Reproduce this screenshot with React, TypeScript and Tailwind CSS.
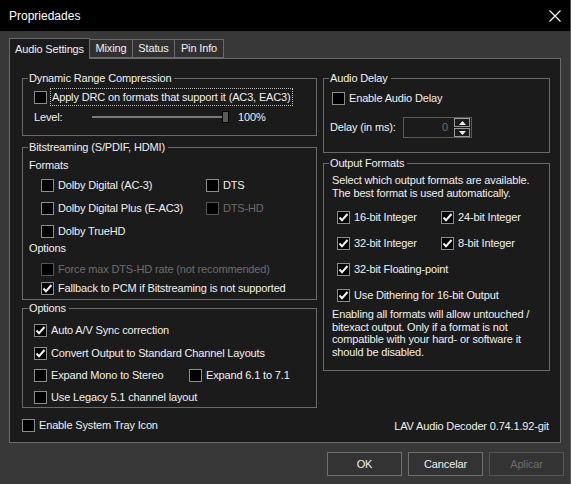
import React from "react";

function Check({ checked = false, disabled = false }: { checked?: boolean; disabled?: boolean }) {
  return (
    <span
      className={`flex h-[13px] w-[13px] shrink-0 items-center justify-center border bg-black ${
        disabled ? "border-[#555]" : "border-[#8c8c8c]"
      }`}
    >
      {checked && (
        <svg width="11" height="11" viewBox="0 0 11 11">
          <path d="M1.5 5.5 L4 8.2 L9.5 2" fill="none" stroke="#f2f2f2" strokeWidth="2" />
        </svg>
      )}
    </span>
  );
}

function CheckRow({
  label,
  checked,
  disabled,
  className = "",
}: {
  label: string;
  checked?: boolean;
  disabled?: boolean;
  className?: string;
}) {
  return (
    <div className={`flex h-[14px] items-center gap-[4px] ${className}`}>
      <Check checked={checked} disabled={disabled} />
      <span className={`whitespace-nowrap ${disabled ? "text-[#6d6d6d]" : ""}`}>{label}</span>
    </div>
  );
}

function Group({ title, className = "", children }: { title: string; className?: string; children: React.ReactNode }) {
  return (
    <fieldset className={`border border-[#6a6a6a] ${className}`}>
      <legend className="ml-[5px] h-[14px] px-[1px] pr-[3px] leading-[14px]">{title}</legend>
      {children}
    </fieldset>
  );
}

export default function App() {
  return (
    <div className="flex h-[484px] w-[571px] flex-col border-r border-[#555] bg-[#383838] font-['Liberation_Sans',Arial,sans-serif] text-[11px] tracking-[-0.15px] text-[#f0f0f0]">
      {/* title bar */}
      <div className="flex h-[31px] shrink-0 items-center justify-between bg-black pl-[9px] pr-[9px]">
        <span className="text-[12px] tracking-normal text-white">Propriedades</span>
        <svg width="12" height="12" viewBox="0 0 12 12">
          <path d="M0.5 0.5 L11.5 11.5 M11.5 0.5 L0.5 11.5" stroke="#fff" strokeWidth="1.1" />
        </svg>
      </div>

      <div className="flex flex-1 flex-col px-[9px] pt-[7px]">
        {/* tabs */}
        <div className="flex h-[20px] items-end">
          <div className="relative z-10 -mb-px flex h-[21px] w-[81px] items-center justify-center border border-b-0 border-[#6a6a6a] bg-[#1b1b1b]">
            Audio Settings
          </div>
          <div className="flex h-[19px] w-[43px] items-center justify-center border border-l-0 border-[#6a6a6a] bg-[#303030]">
            Mixing
          </div>
          <div className="flex h-[19px] w-[42px] items-center justify-center border border-l-0 border-[#6a6a6a] bg-[#303030]">
            Status
          </div>
          <div className="flex h-[19px] w-[49px] items-center justify-center border border-l-0 border-[#6a6a6a] bg-[#303030]">
            Pin Info
          </div>
        </div>

        {/* panel */}
        <div className="flex h-[385px] gap-[6px] border border-[#6a6a6a] bg-[#1b1b1b] pl-[12px] pt-[12px]">
          {/* left column */}
          <div className="flex w-[295px] flex-col">
            <Group title="Dynamic Range Compression" className="h-[65px]">
              <div className="mt-[5px] flex h-[14px] items-center gap-[3px] pl-[11px]">
                <Check />
                <span className="whitespace-nowrap border border-dotted border-[#bdbdbd] px-[1px]">
                  Apply DRC on formats that support it (AC3, EAC3)
                </span>
              </div>
              <div className="mt-[6px] flex h-[14px] items-center pl-[11px]">
                <span className="w-[58px]">Level:</span>
                <div className="relative h-[14px] w-[137px]">
                  <div className="absolute left-0 right-[4px] top-[6px] h-[2px] bg-[#7a7a7a]" />
                  <div className="absolute right-0 top-[1px] h-[12px] w-[7px] border border-black bg-[#5a5a5a]" />
                </div>
                <span className="ml-[9px]">100%</span>
              </div>
            </Group>

            <Group title="Bitstreaming (S/PDIF, HDMI)" className="mt-[4px] h-[160px]">
              <div className="mt-[4px] h-[14px] pl-[6px] leading-[14px]">Formats</div>
              <div className="mt-[6px] flex pl-[18px]">
                <div className="flex w-[165px] flex-col gap-[9px]">
                  <CheckRow label="Dolby Digital (AC-3)" />
                  <CheckRow label="Dolby Digital Plus (E-AC3)" />
                  <CheckRow label="Dolby TrueHD" />
                </div>
                <div className="flex flex-col gap-[9px]">
                  <CheckRow label="DTS" />
                  <CheckRow label="DTS-HD" disabled />
                </div>
              </div>
              <div className="mt-[3px] h-[14px] pl-[6px] leading-[14px]">Options</div>
              <CheckRow className="mt-[7px] pl-[18px]" label="Force max DTS-HD rate (not recommended)" disabled />
              <CheckRow className="mt-[5px] pl-[18px]" label="Fallback to PCM if Bitstreaming is not supported" checked />
            </Group>

            <Group title="Options" className="mt-[1px] h-[107px]">
              <div className="pl-[11px]">
                <CheckRow className="mt-[8px]" label="Auto A/V Sync correction" checked />
                <CheckRow className="mt-[9px]" label="Convert Output to Standard Channel Layouts" checked />
                <div className="mt-[8px] flex">
                  <CheckRow className="w-[155px]" label="Expand Mono to Stereo" />
                  <CheckRow label="Expand 6.1 to 7.1" />
                </div>
                <CheckRow className="mt-[8px]" label="Use Legacy 5.1 channel layout" />
              </div>
            </Group>

            <CheckRow className="mt-[10px]" label="Enable System Tray Icon" />
          </div>

          {/* right column */}
          <div className="flex w-[227px] flex-col">
            <Group title="Audio Delay" className="h-[82px]">
              <CheckRow className="mt-[6px] pl-[8px]" label="Enable Audio Delay" />
              <div className="mt-[12px] flex items-center pl-[6px]">
                <span className="w-[73px]">Delay (in ms):</span>
                <div className="flex h-[21px] w-[69px] border border-[#5a5a5a] bg-[#1b1b1b]">
                  <span className="flex-1 pr-[6px] text-right leading-[19px] text-[#6d6d6d]">0</span>
                  <div className="flex w-[17px] flex-col justify-center gap-px pr-px">
                    <div className="flex h-[9px] items-center justify-center border border-[#9a9a9a]">
                      <svg width="7" height="4" viewBox="0 0 7 4">
                        <path d="M0 4 L3.5 0 L7 4 Z" fill="#f0f0f0" />
                      </svg>
                    </div>
                    <div className="flex h-[9px] items-center justify-center border border-[#9a9a9a]">
                      <svg width="7" height="4" viewBox="0 0 7 4">
                        <path d="M0 0 L3.5 4 L7 0 Z" fill="#f0f0f0" />
                      </svg>
                    </div>
                  </div>
                </div>
              </div>
            </Group>

            <Group title="Output Formats" className="mt-[3px] h-[215px]">
              <p className="mt-[4px] pl-[8px] leading-[13px]">
                Select which output formats are available.
                <br />
                The best format is used automatically.
              </p>
              <div className="mt-[10px] flex pl-[13px]">
                <div className="flex w-[104px] flex-col gap-[12px]">
                  <CheckRow label="16-bit Integer" checked />
                  <CheckRow label="32-bit Integer" checked />
                </div>
                <div className="flex flex-col gap-[12px]">
                  <CheckRow label="24-bit Integer" checked />
                  <CheckRow label="8-bit Integer" checked />
                </div>
              </div>
              <CheckRow className="mt-[12px] pl-[13px]" label="32-bit Floating-point" checked />
              <CheckRow className="mt-[12px] pl-[13px]" label="Use Dithering for 16-bit Output" checked />
              <p className="mt-[6px] pl-[8px] pr-[4px] leading-[12.7px]">
                Enabling all formats will allow untouched / bitexact output. Only if a format is not compatible with your
                hard- or software it should be disabled.
              </p>
            </Group>

            <div className="mt-[47px] pr-px text-right">LAV Audio Decoder 0.74.1.92-git</div>
          </div>
        </div>

        {/* buttons */}
        <div className="-mr-[3px] mt-[9px] flex justify-end gap-[6px]">
          <button className="h-[24px] w-[75px] border border-[#6e6e6e] bg-[#333] text-[#f0f0f0]">OK</button>
          <button className="h-[24px] w-[75px] border border-[#6e6e6e] bg-[#333] text-[#f0f0f0]">Cancelar</button>
          <button className="h-[24px] w-[75px] border border-[#555] bg-[#333] text-[#6d6d6d]">Aplicar</button>
        </div>
      </div>
    </div>
  );
}
